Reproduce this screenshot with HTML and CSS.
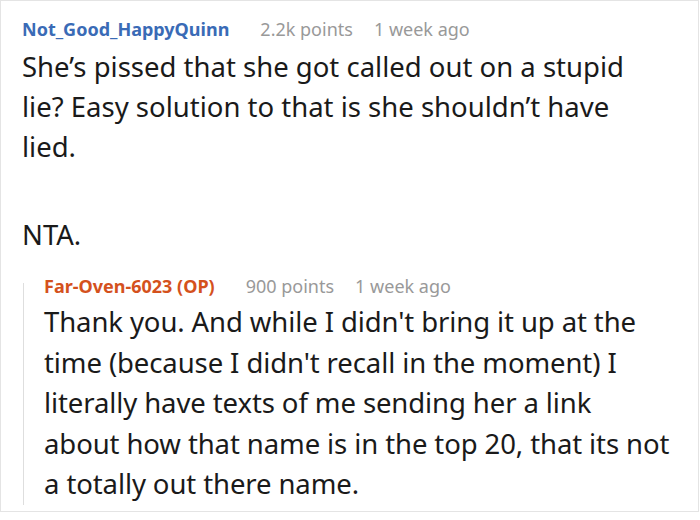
FILE: index.html
```html
<!DOCTYPE html>
<html>
<head>
<meta charset="utf-8">
<link rel="stylesheet" href="styles.css">
</head>
<body>
<div class="card">
  <div class="comment">
    <div class="meta">
      <span class="user user-blue">Not_Good_HappyQuinn</span>
      <span class="points">2.2k points</span>
      <span class="time">1 week ago</span>
    </div>
    <div class="body main-body">
      <p>She’s pissed that she got called out on a stupid lie? Easy solution to that is she shouldn’t have lied.</p>
      <p>NTA.</p>
    </div>
    <div class="reply">
      <div class="meta reply-meta">
        <span class="user user-op">Far-Oven-6023 (OP)</span>
        <span class="points">900 points</span>
        <span class="time">1 week ago</span>
      </div>
      <div class="body reply-body">
        <p>Thank you. And while I didn't bring it up at the<br>time (because I didn't recall in the moment) I<br>literally have texts of me sending her a link<br>about how that name is in the top 20, that its not<br>a totally out there name.</p>
      </div>
    </div>
  </div>
</div>
</body>
</html>
```

FILE: styles.css
```css
html, body {
  margin: 0;
  padding: 0;
  background: #ffffff;
}
.card {
  width: 697px;
  height: 510px;
  border: 1px solid #e4e4e4;
  overflow: hidden;
  font-family: "Noto Sans", "Open Sans", sans-serif;
  color: #1a1a1a;
}
.comment {
  padding: 16px 6px 0 21px;
}
.meta {
  display: flex;
  align-items: baseline;
  font-size: 18px;
  line-height: 24px;
  white-space: nowrap;
}
.user {
  font-weight: 700;
  margin-right: 31px;
}
.user-blue { color: #3a6bb6; }
.user-op { color: #d4511d; }
.points {
  color: #999999;
  margin-right: 21px;
}
.time {
  color: #999999;
}
.body {
  font-size: 27.5px;
  line-height: 40px;
  margin-top: 6px;
}
.main-body {
  max-width: 625px;
}
.body p {
  margin: 0 0 48px 0;
}
.body p:last-child {
  margin-bottom: 0;
}
.reply {
  display: flex;
  flex-direction: column;
  margin-top: 28px;
  margin-left: 1px;
  border-left: 1px solid #dedede;
  padding-left: 20px;
}
.reply-meta {
  margin-top: -9px;
}
.reply-body {
  margin-top: 4px;
  line-height: 40.5px;
  white-space: nowrap;
  letter-spacing: -0.1px;
}
```
